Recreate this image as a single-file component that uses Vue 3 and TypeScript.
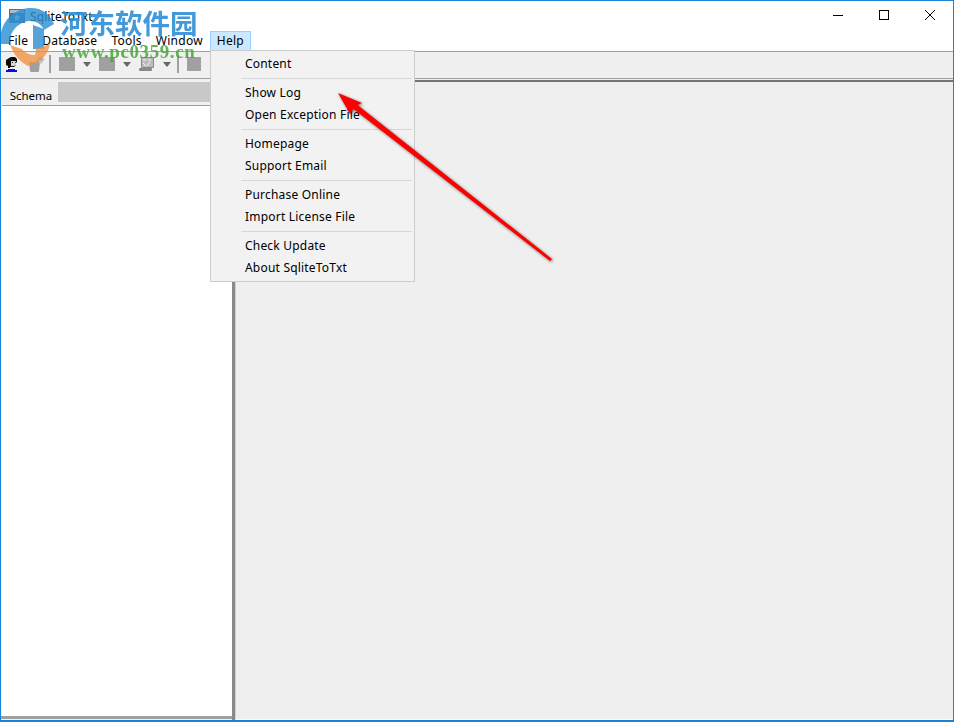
<script setup lang="ts">
const menus: string[] = ['File', 'Database', 'Tools', 'Window']
const groups: string[][] = [
  ['Content'],
  ['Show Log', 'Open Exception File'],
  ['Homepage', 'Support Email'],
  ['Purchase Online', 'Import License File'],
  ['Check Update', 'About SqliteToTxt'],
]
</script>

<template>
  <div class="window">
    <header class="titlebar">
      <svg class="app-icon" width="16" height="16" viewBox="0 0 16 16">
        <rect x="0" y="1" width="16" height="14" fill="#4f7390" />
        <rect x="1" y="2" width="14" height="3" fill="#a9bccb" />
        <path d="M8 6l1.2 2.4 2.5.2-2 1.6.7 2.5L8 11.4l-2.4 1.3.7-2.5-2-1.6 2.5-.2z" fill="#eef3f6" />
      </svg>
      <span class="title">SqliteToTxt</span>
      <div class="controls">
        <svg width="10" height="10" viewBox="0 0 10 10"><path d="M0 5.5h10" stroke="#000" /></svg>
        <svg width="10" height="10" viewBox="0 0 10 10"><rect x=".5" y=".5" width="9" height="9" fill="none" stroke="#000" /></svg>
        <svg width="10" height="10" viewBox="0 0 10 10"><path d="M0 0l10 10M10 0L0 10" stroke="#000" /></svg>
      </div>
    </header>

    <nav class="menubar">
      <span v-for="m in menus" :key="m" class="menu">{{ m }}</span>
      <span class="menu active">Help</span>
    </nav>

    <div class="toolbar">
      <svg class="tool" width="14" height="15" viewBox="0 0 14 15">
        <path d="M4 1l2-1h4l2 2v3l-1 1v2l-2 2H5v1H3V9L1 8V3z" fill="#0c0c0c" />
        <path d="M6 4h5v4l-2 1H6z" fill="#ddd8d2" />
        <path d="M7 5h1v1H7zM10 5h1v1h-1z" fill="#222" />
        <path d="M3 12h7v1h2v2H1v-2h2z" fill="#0a0ae0" />
      </svg>
      <svg class="tool trash" width="17" height="16" viewBox="0 0 17 16">
        <path d="M1 6h11l-1 9a1 1 0 0 1-1 1H3a1 1 0 0 1-1-1z" fill="#a0a0a0" />
        <path d="M7 5l5-5 5 3-4 5-3-2z" fill="#c4c4c4" />
        <path d="M11 2l3 2M9 5l2 1" stroke="#8c8c8c" />
      </svg>
      <i class="sep"></i>
      <i class="block"></i>
      <i class="caret"></i>
      <i class="block"></i>
      <i class="caret"></i>
      <svg class="tool report" width="15" height="15" viewBox="0 0 15 15">
        <path d="M2.5 .5h12v10h-12z" fill="#bcbcbc" stroke="#8a8a8a" />
        <path d="M4 3h3M9 3h3M4 6l3 3M11 5L8 9" stroke="#f3f3f3" />
        <rect x="0" y="11" width="13" height="3" rx="1" fill="#8a8a8a" />
      </svg>
      <i class="caret spaced"></i>
      <i class="sep"></i>
      <i class="block small"></i>
    </div>

    <main class="body">
      <section class="left">
        <div class="tabs">
          <span class="tab">Schema</span>
          <span class="tab-fill"></span>
        </div>
        <div class="tree"></div>
      </section>
      <div class="splitter"></div>
      <section class="right"></section>
    </main>

    <div class="dropdown">
      <template v-for="(g, i) in groups" :key="i">
        <div v-if="i > 0" class="divider"></div>
        <div v-for="item in g" :key="item" class="item">{{ item }}</div>
      </template>
    </div>

    <div class="watermark">
      <svg class="wm-logo" width="60" height="70" viewBox="0 0 60 70">
        <path d="M0 44C-1 23 13 8 31 8c11 0 19 6 23 16l-10 6c-4-9-14-11-22-7C14 27 10 34 9 44z" fill="#2e8fd2" opacity=".82" />
        <path d="M33 25l11 4v20H33z" fill="#2e8fd2" opacity=".82" />
        <path d="M10 45l12 4c3 4 8 6 13 6l1-6 14-5c-2 12-11 19-22 22C20 62 14 55 10 45z" fill="#f2913d" opacity=".78" />
      </svg>
      <span class="wm-cn">河东软件园</span>
      <span class="wm-url">www.pc0359.cn</span>
    </div>

    <svg class="arrow" width="240" height="190" viewBox="330 80 240 190">
      <path d="M338 93 362 103 357.5 105 552 259 550 261 353.5 109 350 114z" fill="#f00" />
    </svg>
  </div>
</template>

<style>
html, body { margin: 0; padding: 0; }
</style>

<style scoped>
.window {
  position: relative;
  box-sizing: border-box;
  width: 954px;
  height: 722px;
  overflow: hidden;
  display: flex;
  flex-direction: column;
  border: 1px solid #1883d7;
  border-bottom-width: 2px;
  background: #f0f0f0;
  font-family: "Noto Sans", sans-serif;
  font-size: 12px;
  color: #000;
}
.titlebar {
  flex: none;
  height: 30px;
  background: #fff;
  display: flex;
  align-items: center;
  padding-left: 8px;
  gap: 5px;
}
.title { flex: 1; letter-spacing: .1px; }
.controls {
  display: flex;
  gap: 36px;
  padding: 0 18px 2px 0;
  align-items: center;
}
.menubar {
  flex: none;
  height: 21px;
  box-sizing: border-box;
  background: #fff;
  display: flex;
  border-bottom: 1px solid #a0a0a0;
}
.menu {
  padding: 0 7px;
  line-height: 20px;
  box-sizing: border-box;
  height: 20px;
  letter-spacing: .25px;
}
.menu.active {
  background: #cce8ff;
  border: 1px solid #99d1ff;
  line-height: 18px;
  padding: 0 6px;
  width: 41px;
}
.toolbar {
  flex: none;
  height: 27px;
  box-sizing: border-box;
  background: #f0f0f0;
  border-bottom: 1px solid #a0a0a0;
  display: flex;
  align-items: center;
  padding: 0 0 2px 4px;
}
.tool { flex: none; }
.trash { margin: 0 4px 0 9px; }
.sep { width: 2px; height: 18px; background: #a0a0a0; margin-right: 8px; flex: none; }
.block { width: 16px; height: 14px; background: #a0a0a0; flex: none; }
.block.small { width: 14px; }
.caret {
  width: 0;
  height: 0;
  flex: none;
  border: 4px solid transparent;
  border-top: 5px solid #666;
  border-bottom: 0;
  margin: 0 8px 0 8px;
}
.caret.spaced { margin: 0 6px 0 9px; }
.body {
  flex: 1;
  min-height: 0;
  display: flex;
  background: #f0f0f0;
}
.left {
  width: 231px;
  box-sizing: border-box;
  flex: none;
  display: flex;
  flex-direction: column;
  padding: 2px 0 0 1px;
  margin-bottom: 1px;
  border-bottom: 3px solid #a0a0a0;
}
.tabs { flex: none; height: 24px; display: flex; }
.tab {
  box-sizing: border-box;
  width: 56px;
  height: 24px;
  padding-left: 2px;
  line-height: 30px;
  text-align: center;
  font-size: 11.5px;
  background: #f0f0f0;
}
.tab-fill { flex: 1; background: #c8c8c8; height: 20px; margin-top: 1px; }
.tree {
  flex: 1;
  background: #fff;
  border-top: 1px solid #a0a0a0;
}
.splitter { width: 3px; flex: none; background: #8a8a8a; }
.right {
  flex: 1;
  margin-top: 1px;
  background: #efefef;
  border-left: 1px solid #d0d0d0;
  border-top: 2px solid #747474;
  border-bottom: 1px solid #fff;
}
.dropdown {
  position: absolute;
  left: 209px;
  top: 49px;
  box-sizing: border-box;
  width: 205px;
  padding: 2px 1px;
  background: #f2f2f2;
  border: 1px solid #ccc;
  z-index: 2;
}
.item {
  height: 22px;
  line-height: 22px;
  padding-left: 33px;
  letter-spacing: .2px;
}
.divider {
  height: 1px;
  margin: 3px 1px 3px 29px;
  background: #d7d7d7;
}
.watermark {
  position: absolute;
  left: -1px;
  top: -1px;
  width: 210px;
  height: 80px;
  z-index: 3;
  pointer-events: none;
}
.wm-logo { position: absolute; left: 0; top: 0; }
.wm-cn {
  position: absolute;
  left: 60px;
  top: 7px;
  font: 700 27.5px/30px "Noto Sans CJK SC", sans-serif;
  color: #2f8fd6;
  opacity: .9;
}
.wm-url {
  position: absolute;
  left: 62px;
  top: 42px;
  font: 700 19px/20px "Liberation Serif", serif;
  color: #4aa53c;
  opacity: .85;
  letter-spacing: .6px;
}
.arrow {
  position: absolute;
  left: 329px;
  top: 79px;
  z-index: 4;
  filter: drop-shadow(1px 1px 1.5px rgba(0, 0, 0, .55));
}
</style>
